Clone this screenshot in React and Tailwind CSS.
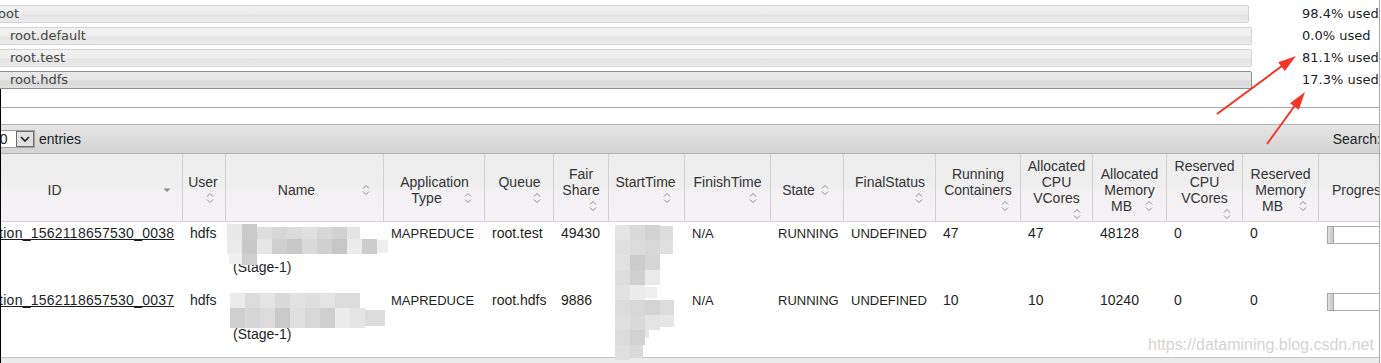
import React from "react";

const Sort = () => (
  <svg width="16" height="16" viewBox="0 0 16 16" className="block shrink-0">
    <path d="M5 6.5 L8 3.5 L11 6.5 M5 9.5 L8 12.5 L11 9.5" fill="none" stroke="#8f8f8f" strokeWidth="1" />
  </svg>
);

const Desc = () => (
  <svg width="16" height="16" viewBox="0 0 16 16" className="block shrink-0">
    <path d="M4.5 6.5 H11.5 L8 10 Z" fill="#8a8a8a" />
  </svg>
);

const HEAD = [
  { w: "w-[242px]", pl: "pl-[9px]", pr: "pr-[7px]", lines: ["ID"], icon: "desc", inline: true },
  { w: "w-[43px]", pl: "pl-[5px]", pr: "pr-[7px]", lines: ["User"], icon: "sort" },
  { w: "w-[158px]", pl: "pl-[9px]", pr: "pr-[9px]", lines: ["Name"], icon: "sort", inline: true },
  { w: "w-[101px]", pl: "pl-[9px]", pr: "pr-[8px]", lines: ["Application", "Type"], icon: "sort", inline: true },
  { w: "w-[69px]", pl: "pl-[9px]", pr: "pr-[8px]", lines: ["Queue"], icon: "sort" },
  { w: "w-[55px]", pl: "pl-[7px]", pr: "pr-[7px]", lines: ["Fair", "Share"], icon: "sort" },
  { w: "w-[76px]", pl: "pl-[7px]", pr: "pr-[9px]", lines: ["StartTime"], icon: "sort" },
  { w: "w-[86px]", pl: "pl-[9px]", pr: "pr-[9px]", lines: ["FinishTime"], icon: "sort" },
  { w: "w-[73px]", pl: "pl-[9px]", pr: "pr-[10px]", lines: ["State"], icon: "sort", inline: true },
  { w: "w-[92px]", pl: "pl-[9px]", pr: "pr-[8px]", lines: ["FinalStatus"], icon: "sort" },
  { w: "w-[85px]", pl: "pl-[7px]", pr: "pr-[7px]", lines: ["Running", "Containers"], icon: "sort" },
  { w: "w-[72px]", pl: "pl-[7px]", pr: "pr-[7px]", lines: ["Allocated", "CPU", "VCores"], icon: "sort" },
  { w: "w-[74px]", pl: "pl-[9px]", pr: "pr-[9px]", lines: ["Allocated", "Memory", "MB"], icon: "sort", inline: true },
  { w: "w-[76px]", pl: "pl-[7px]", pr: "pr-[7px]", lines: ["Reserved", "CPU", "VCores"], icon: "sort" },
  { w: "w-[76px]", pl: "pl-[7px]", pr: "pr-[7px]", lines: ["Reserved", "Memory", "MB"], icon: "sort", inline: true },
];

const ROWS = [
  {
    h: "h-[67px]",
    id: "application_1562118657530_0038",
    queue: "root.test",
    fair: "49430",
    run: "47",
    cpu: "47",
    mem: "48128",
  },
  {
    h: "h-[68px]",
    id: "application_1562118657530_0037",
    queue: "root.hdfs",
    fair: "9886",
    run: "10",
    cpu: "10",
    mem: "10240",
  },
];

function HeadCell({ c }) {
  const Icon = c.icon === "desc" ? Desc : Sort;
  return (
    <div className={`${c.w} ${c.pl} ${c.pr} shrink-0 h-full border-r border-[#d0d0d0] pt-[5px] flex flex-col justify-center`}>
      {c.lines.map((l, i) => {
        const last = i === c.lines.length - 1;
        if (last && c.inline) {
          return (
            <div key={i} className="flex items-center">
              <span className="flex-1 flex justify-center whitespace-nowrap">{l}</span>
              <Icon />
            </div>
          );
        }
        return (
          <div key={i} className="flex justify-center whitespace-nowrap">
            {l}
          </div>
        );
      })}
      {!c.inline && (
        <div className="flex justify-end">
          <Icon />
        </div>
      )}
    </div>
  );
}

function Cell({ w, children, caps, pl }) {
  return (
    <div
      className={`${w} shrink-0 ${pl || "pl-[7px]"} pt-[3px] leading-[17px] whitespace-nowrap ${caps ? "text-[13px]" : "text-[14px]"}`}
    >
      {children}
    </div>
  );
}

function QueueBar({ label, used, root, selected }) {
  return (
    <div className="flex items-center h-[18px]">
      <div
        className={`-ml-[20px] h-[18px] shrink-0 rounded-[2px] border leading-[16px] text-[13px] text-[#444] whitespace-nowrap ${
          root ? "w-[1269px] pl-[12px]" : "w-[1272px] pl-[29px]"
        } ${
          selected
            ? "border-[#8e8e8e] bg-[linear-gradient(180deg,#e9e9e9_0%,#e6e6e6_50%,#dadada_56%,#dddddd_80%,#e2e2e2_100%)]"
            : "border-[#d3d3d3] bg-[linear-gradient(180deg,#f1f1f1_0%,#eeeeee_50%,#e4e4e4_56%,#e7e7e7_80%,#ededed_100%)]"
        }`}
      >
        {label}
      </div>
      <div className={`${root ? "ml-[53px]" : "ml-[50px]"} whitespace-nowrap text-[13px] leading-[16px] text-[#222]`}>
        {used}
      </div>
    </div>
  );
}

const MOSAIC = [
  // row 1 name
  [227, 224, 15, 15, "#e8e8e8"], [242, 224, 15, 15, "#cacaca"], [257, 227, 15, 12, "#dedede"], [272, 227, 15, 12, "#d6d6d6"],
  [287, 227, 15, 12, "#dcdcdc"], [302, 227, 15, 12, "#e0e0e0"], [317, 227, 15, 12, "#d8d8d8"], [332, 227, 15, 12, "#d2d2d2"],
  [347, 227, 13, 12, "#e4e4e4"],
  [227, 239, 15, 15, "#eaeaea"], [242, 239, 15, 15, "#c8c8c8"], [257, 239, 15, 15, "#e6e6e6"], [272, 239, 15, 15, "#cfcfcf"],
  [287, 239, 15, 15, "#c8c8c8"], [302, 239, 15, 15, "#dadada"], [317, 239, 15, 15, "#d0d0d0"], [332, 239, 15, 15, "#c6c6c6"],
  [347, 239, 15, 15, "#ececec"], [362, 239, 15, 15, "#cdcdcd"], [377, 240, 11, 13, "#eeeeee"],
  [229, 254, 13, 10, "#efefef"], [242, 254, 15, 11, "#cfcfcf"],
  // row 2 name
  [230, 293, 15, 15, "#ebebeb"], [245, 293, 15, 15, "#dcdcdc"], [260, 293, 15, 15, "#e4e4e4"], [275, 293, 15, 15, "#dadada"],
  [290, 293, 15, 15, "#e2e2e2"], [305, 293, 15, 15, "#dedede"], [320, 293, 15, 15, "#e4e4e4"], [335, 293, 25, 15, "#dcdcdc"],
  [230, 308, 15, 20, "#cfcfcf"], [245, 308, 15, 20, "#d6d6d6"], [260, 308, 15, 20, "#dcdcdc"], [275, 308, 15, 20, "#c9c9c9"],
  [290, 308, 15, 20, "#e0e0e0"], [305, 308, 15, 20, "#d8d8d8"], [320, 308, 15, 20, "#cfcfcf"], [335, 308, 15, 20, "#ececec"],
  [350, 308, 15, 20, "#e4e4e4"], [365, 310, 20, 16, "#dcdcdc"],
  // start time column
  [615, 225, 15, 15, "#e4e4e4"], [630, 225, 15, 15, "#dadada"], [645, 225, 15, 15, "#d2d2d2"], [660, 226, 13, 14, "#dcdcdc"],
  [615, 240, 15, 15, "#e0e0e0"], [630, 240, 15, 15, "#dcdcdc"], [645, 240, 15, 15, "#d8d8d8"], [660, 240, 13, 14, "#e0e0e0"],
  [615, 255, 15, 15, "#e2e2e2"], [630, 255, 15, 15, "#cccccc"], [645, 255, 15, 15, "#d6d6d6"],
  [615, 270, 15, 15, "#dedede"], [630, 270, 15, 15, "#d0d0d0"], [645, 270, 15, 15, "#eaeaea"],
  [615, 285, 15, 15, "#e2e2e2"], [630, 285, 15, 15, "#ececec"], [645, 287, 12, 11, "#eeeeee"],
  [615, 300, 15, 15, "#dcdcdc"], [630, 300, 15, 15, "#d8d8d8"], [645, 300, 15, 15, "#d4d4d4"], [660, 300, 14, 15, "#dcdcdc"],
  [615, 315, 15, 15, "#e0e0e0"], [630, 315, 15, 15, "#dadada"], [645, 315, 15, 15, "#e4e4e4"], [660, 315, 14, 12, "#e6e6e6"],
  [615, 330, 15, 15, "#dcdcdc"], [630, 330, 15, 15, "#d2d2d2"], [645, 330, 4, 8, "#e6e6e6"],
  [615, 345, 15, 15, "#e0e0e0"], [630, 345, 13, 13, "#dadada"],
];

export default function App() {
  const widths = HEAD.map((h) => h.w);
  return (
    <div className="relative w-[1381px] h-[363px] overflow-hidden bg-white font-[family-name:'Liberation_Sans',Arial,sans-serif]">
      <div className="w-[1380px] h-full border-r border-[#a9a9a9] flex flex-col">
        {/* queue bars */}
        <div className="h-[89px] shrink-0 overflow-hidden pt-[5px] flex flex-col gap-[4px] font-[family-name:'DejaVu_Sans',Verdana,sans-serif]">
          <QueueBar label="root" used="98.4% used" root />
          <QueueBar label="root.default" used="0.0% used" />
          <QueueBar label="root.test" used="81.1% used" />
          <QueueBar label="root.hdfs" used="17.3% used" selected />
        </div>

        {/* applications */}
        <div className="flex-1 overflow-hidden border-l border-black">
          <div className="-ml-[60px] w-[1440px] text-[#1e1e1e]">
            <div className="h-[19px] border-b border-[#a8a8a8]" />
            <div className="h-[16px]" />
            {/* toolbar */}
            <div className="h-[30px] border-t border-b border-[#b3b3b3] bg-[linear-gradient(180deg,#e6e6e6_0%,#dcdcdc_50%,#d3d3d3_100%)] flex items-center justify-between text-[14px] text-[#222]">
              <div className="flex items-center ml-[47px]">
                <div className="flex h-[18px] border border-[#a0a0a0] bg-white">
                  <span className="w-[27px] pl-[3px] leading-[16px]">20</span>
                  <span className="w-[18px] border border-[#6e6e6e] bg-[#e1e1e1] flex items-center justify-center">
                    <svg width="12" height="10" viewBox="0 0 12 10">
                      <path d="M2 3 L6 7 L10 3" fill="none" stroke="#222" strokeWidth="1.6" />
                    </svg>
                  </span>
                </div>
                <span className="ml-[4px]">entries</span>
              </div>
              <span className="whitespace-nowrap">Search:</span>
            </div>

            {/* header */}
            <div className="flex h-[68px] border-b border-[#d3d3d3] bg-[linear-gradient(180deg,#ededed_0%,#efefef_50%,#f3f1f3_53%,#f6f3f6_100%)] text-[14px] leading-[16px] text-[#333]">
              {HEAD.map((c, i) => (
                <HeadCell key={i} c={c} />
              ))}
              <div className="w-[100px] shrink-0 h-full pl-[13px] pt-[5px] flex items-center whitespace-nowrap">Progress</div>
            </div>

            {/* rows */}
            {ROWS.map((r, i) => (
              <div key={i} className={`flex ${r.h} bg-white`}>
                <Cell w={widths[0]} pl="pl-[12px]">
                  <a className="underline tracking-[0.25px] text-[#1e1e1e]">{r.id}</a>
                </Cell>
                <Cell w={widths[1]}>hdfs</Cell>
                <Cell w={widths[2]}>
                  <div className="h-[34px]" />
                  <div>(Stage-1)</div>
                </Cell>
                <Cell w={widths[3]} caps>MAPREDUCE</Cell>
                <Cell w={widths[4]}>{r.queue}</Cell>
                <Cell w={widths[5]}>{r.fair}</Cell>
                <Cell w={widths[6]}></Cell>
                <Cell w={widths[7]} caps>N/A</Cell>
                <Cell w={widths[8]} caps>RUNNING</Cell>
                <Cell w={widths[9]} caps>UNDEFINED</Cell>
                <Cell w={widths[10]}>{r.run}</Cell>
                <Cell w={widths[11]}>{r.cpu}</Cell>
                <Cell w={widths[12]}>{r.mem}</Cell>
                <Cell w={widths[13]}>0</Cell>
                <Cell w={widths[14]}>0</Cell>
                <div className="w-[100px] shrink-0 pl-[8px] pt-[4px]">
                  <div className="h-[18px] w-[100px] border border-[#a8a8a8] bg-white flex">
                    <div className="w-[6px] h-full border-r border-[#a8a8a8] bg-[linear-gradient(90deg,#e2e2e2,#c6c6c6)]" />
                  </div>
                </div>
              </div>
            ))}
            <div className="h-[10px] border-t border-[#c4c4c4] bg-[#ebebeb]" />
          </div>
        </div>
      </div>

      {/* redaction mosaics and annotation arrows */}
      <svg className="absolute left-0 top-0 pointer-events-none" width="1381" height="363" viewBox="0 0 1381 363">
        <defs>
          <filter id="soft" x="-5%" y="-5%" width="110%" height="110%">
            <feGaussianBlur stdDeviation="0.6" />
          </filter>
        </defs>
        <g filter="url(#soft)">
          {MOSAIC.map(([x, y, w, h, f], i) => (
            <rect key={i} x={x} y={y} width={w} height={h} fill={f} />
          ))}
        </g>
        <g stroke="#f2362a" strokeWidth="2" fill="#f2362a">
          <line x1="1217" y1="114" x2="1282" y2="66" />
          <polygon points="1296,56 1284.8,71.1 1278.2,62.2" stroke="none" />
          <line x1="1267" y1="144" x2="1294.6" y2="106" />
          <polygon points="1305,92 1298.8,109.8 1290,103.3" stroke="none" />
        </g>
      </svg>

      <div className="absolute left-[1148px] top-[335px] text-[16px] leading-[20px] text-[#d4d4d4] whitespace-nowrap pointer-events-none">
        https://datamining.blog.csdn.net
      </div>
    </div>
  );
}
